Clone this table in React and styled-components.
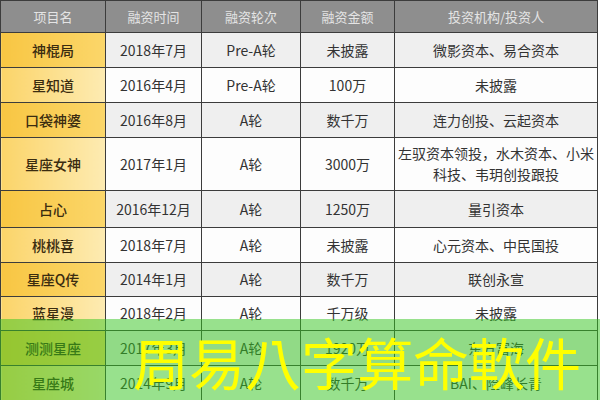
import React from "react"
import styled, { createGlobalStyle } from "styled-components"

const Global = createGlobalStyle`
  html, body {
    margin: 0;
    padding: 0;
    background: #fff;
  }
  body {
    font-family: "Noto Sans CJK SC", "Noto Sans", sans-serif;
  }
`

const Frame = styled.div`
  position: relative;
  width: 600px;
  height: 400px;
  overflow: hidden;
  background: #fff;
`

const Table = styled.table`
  width: 597px;
  table-layout: fixed;
  border-collapse: collapse;
  font-size: 14px;
  color: #333;
`

const Row = styled.tr`
  height: ${({ h }) => h}px;
`

const HeadCell = styled.th`
  background: #8e8e8e;
  color: #e4e4e4;
  font-size: 13px;
  font-weight: 400;
  border: 1.5px solid #3c3c3c;
  padding: 0;
  text-align: center;
`

const Cell = styled.td`
  border: 1.5px solid #3c3c3c;
  padding: 0 2px;
  text-align: center;
  line-height: 21px;
  white-space: nowrap;
  background: ${({ shade }) => shade ? "#efefef" : "#fdfdfd"};
`

const NameCell = styled(Cell)`
  color: #3a2c10;
  font-weight: 500;
  background: ${({ shade }) => shade
    ? "linear-gradient(90deg, #f8c643 0%, #fbd66a 100%)"
    : "linear-gradient(90deg, #fbd469 0%, #fdebb2 100%)"};
`

const Banner = styled.div`
  position: absolute;
  left: 0;
  right: 0;
  top: 319px;
  height: 81px;
  display: flex;
  align-items: center;
  padding-left: 133px;
  background: rgba(52, 198, 30, 0.5);
`

const BannerText = styled.span`
  font-family: "Noto Sans CJK TC", "Noto Sans CJK SC", sans-serif;
  font-size: 56px;
  line-height: 1;
  color: #ffff00;
  white-space: nowrap;
  margin-top: 2px;
`

const widths = [105, 96, 99, 94, 203]
const heads = ["项目名", "融资时间", "融资轮次", "融资金额", "投资机构/投资人"]

const rows = [
  { h: 35, cells: ["神棍局", "2018年7月", "Pre-A轮", "未披露", "微影资本、易合资本"] },
  { h: 35, cells: ["星知道", "2016年4月", "Pre-A轮", "100万", "未披露"] },
  { h: 35, cells: ["口袋神婆", "2016年8月", "A轮", "数千万", "连力创投、云起资本"] },
  { h: 53, cells: ["星座女神", "2017年1月", "A轮", "3000万", ["左驭资本领投，水木资本、小米", "科技、韦玥创投跟投"]] },
  { h: 37, cells: ["占心", "2016年12月", "A轮", "1250万", "量引资本"] },
  { h: 35, cells: ["桃桃喜", "2018年7月", "A轮", "未披露", "心元资本、中民国投"] },
  { h: 34, cells: ["星座Q传", "2014年1月", "A轮", "数千万", "联创永宣"] },
  { h: 34, cells: ["蓝星漫", "2018年2月", "A轮", "千万级", "未披露"] },
  { h: 35, cells: ["测测星座", "2017年3月", "A轮", "1920万", "东方富海"] },
  { h: 35, cells: ["星座城", "2014年9月", "A轮", "数千万", "BAI、险峰长青"] },
]

function renderText(value) {
  if (Array.isArray(value)) {
    return value.map((line, i) => (
      <React.Fragment key={i}>
        {i > 0 && <br />}
        {line}
      </React.Fragment>
    ))
  }
  return value
}

export default function App() {
  return (
    <Frame>
      <Global />
      <Table>
        <colgroup>
          {widths.map((w, i) => <col key={i} style={{ width: w }} />)}
        </colgroup>
        <thead>
          <Row h={32}>
            {heads.map(t => <HeadCell key={t}>{t}</HeadCell>)}
          </Row>
        </thead>
        <tbody>
          {rows.map((r, i) => {
            const shade = i % 2 === 0
            return (
              <Row key={i} h={r.h}>
                <NameCell shade={shade}>{r.cells[0]}</NameCell>
                {r.cells.slice(1).map((c, j) => (
                  <Cell key={j} shade={shade}>{renderText(c)}</Cell>
                ))}
              </Row>
            )
          })}
        </tbody>
      </Table>
      <Banner>
        <BannerText>周易八字算命軟件</BannerText>
      </Banner>
    </Frame>
  )
}
